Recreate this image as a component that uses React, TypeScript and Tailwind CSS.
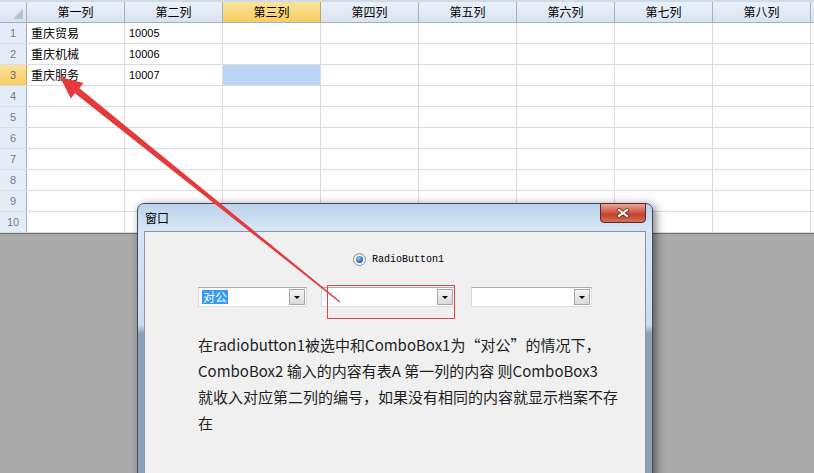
import React from "react";

const cols = ["第一列", "第二列", "第三列", "第四列", "第五列", "第六列", "第七列", "第八列"];
const data: string[][] = [
  ["重庆贸易", "10005"],
  ["重庆机械", "10006"],
  ["重庆服务", "10007"],
];

function Combo({ w, children }: { w: string; children?: React.ReactNode }) {
  return (
    <div
      className={`relative h-[20px] ${w} bg-white border border-[#dbdfe6] border-t-[#abadb3] border-l-[#d5d8de] flex items-center`}
    >
      {children}
      <div className="absolute right-[1px] top-[1px] bottom-[1px] w-[16px] border border-[#a7a7a7] bg-[linear-gradient(#f4f4f4,#d9d9d9)] flex items-center justify-center">
        <div className="w-0 h-0 border-l-[3px] border-r-[3px] border-t-[3px] border-l-transparent border-r-transparent border-t-black" />
      </div>
    </div>
  );
}

export default function App() {
  return (
    <div className="relative w-[814px] h-[473px] overflow-hidden bg-[#ababab] font-['Noto_Sans_CJK_SC',sans-serif]">
      {/* spreadsheet */}
      <div className="bg-white">
        <div className="h-[2px] bg-[#d0dbe8]" />
        <div className="flex h-[21px] bg-[linear-gradient(#eaf0f8,#d9e4f1)] border-b border-[#9db3cc]">
          <div className="relative w-[27px] border-r border-[#9db3cc]">
            <div className="absolute right-[3px] bottom-[3px] w-0 h-0 border-l-[10px] border-b-[10px] border-l-transparent border-b-[#b5c1ce]" />
          </div>
          {cols.map((c, i) => (
            <div
              key={c}
              className={
                i === 2
                  ? "w-[98px] border-r border-[#c9a64a] bg-[linear-gradient(#fbe39d,#f7cd62)] flex items-center justify-center text-[12px] text-black"
                  : "w-[98px] border-r border-[#9db3cc] flex items-center justify-center text-[12px] text-black"
              }
            >
              {c}
            </div>
          ))}
          <div className="flex-1" />
        </div>
        {Array.from({ length: 10 }).map((_, r) => (
          <div key={r} className="flex h-[21px] border-b border-[#dadcde]">
            <div
              className={
                r === 2
                  ? "w-[27px] border-r border-[#c9a64a] bg-[linear-gradient(#fbe39d,#f7cd62)] flex items-center justify-center text-[11px] text-[#6a6a6a] font-['Liberation_Sans',sans-serif]"
                  : "w-[27px] border-r border-[#9db3cc] bg-[#e4ecf7] flex items-center justify-center text-[11px] text-[#6b7d99] font-['Liberation_Sans',sans-serif]"
              }
            >
              {r + 1}
            </div>
            {cols.map((c, i) => (
              <div
                key={c}
                className={
                  r === 2 && i === 2
                    ? "w-[98px] border-r border-[#dadcde] bg-[#bcd5f4]"
                    : "w-[98px] border-r border-[#dadcde] flex items-center pl-[4px]"
                }
              >
                {data[r] && i === 0 && <span className="text-[12px] text-black">{data[r][0]}</span>}
                {data[r] && i === 1 && (
                  <span className="text-[11px] text-black font-['Liberation_Sans',sans-serif]">{data[r][1]}</span>
                )}
              </div>
            ))}
            <div className="flex-1" />
          </div>
        ))}
      </div>
      <div className="h-[1px] bg-[#6d6d6d]" />

      {/* dialog */}
      <div className="absolute left-[137px] top-[203px] w-[516px] h-[290px] rounded-t-[7px] border border-[#3f4d5e] bg-[linear-gradient(180deg,#bcd3ec_0%,#d6e6f6_9%,#cbdcee_42%,#8b9fb6_45%,#8b9fb6_100%)] shadow-[3px_2px_10px_rgba(0,0,0,0.5)]">
        <div className="h-[27px] flex items-center pl-[7px] text-[12px] text-black">窗口</div>
        <div className="absolute left-[462px] top-[-1px] w-[46px] h-[20px] rounded-b-[4px] border border-[#5a2a24] bg-[linear-gradient(#e8a898,#d05a44_45%,#c2412b_60%,#d8725c)] flex items-center justify-center">
          <svg width="14" height="10" viewBox="0 0 14 10">
            <path d="M3 2 L11 8 M11 2 L3 8" stroke="#6b2b22" strokeWidth="3.6" strokeLinecap="square" />
            <path d="M3 2 L11 8 M11 2 L3 8" stroke="#ffffff" strokeWidth="2" strokeLinecap="square" />
          </svg>
        </div>
        <div className="mx-[6px] h-[262px] bg-[#f0f0f0] border border-[#8596aa]">
          {/* radio */}
          <div className="mt-[20px] ml-[208px] h-[14px] flex items-center">
            <div className="w-[13px] h-[13px] rounded-full border border-[#8a8c8e] bg-[linear-gradient(#e6e6e6,#ffffff)] flex items-center justify-center">
              <div className="w-[7px] h-[7px] rounded-full bg-[radial-gradient(circle_at_40%_35%,#8fd2ff,#2b6fb3_60%,#1b4f86)]" />
            </div>
            <span className="ml-[6px] text-[10px] text-black font-['Liberation_Mono','Courier_New',monospace]">RadioButton1</span>
          </div>
          {/* combos */}
          <div className="mt-[21px] ml-[53px] flex">
            <Combo w="w-[109px]">
              <span className="ml-[3px] px-[1px] bg-[#3399ff] text-white text-[12px] leading-[14px]">对公</span>
            </Combo>
            <div className="ml-[14px]">
              <Combo w="w-[134px]" />
            </div>
            <div className="ml-[16px]">
              <Combo w="w-[121px]" />
            </div>
          </div>
          {/* text */}
          <div className="mt-[25px] ml-[53px] text-[15px] leading-[26px] text-[#1e1e1e] whitespace-nowrap">
            <div>在radiobutton1被选中和ComboBox1为“对公”的情况下，</div>
            <div>ComboBox2 输入的内容有表A 第一列的内容 则ComboBox3</div>
            <div>就收入对应第二列的编号，如果没有相同的内容就显示档案不存</div>
            <div>在</div>
          </div>
        </div>
      </div>

      {/* red highlight rect */}
      <div className="absolute left-[327px] top-[285px] w-[128px] h-[34px] border border-[#e04848]" />

      {/* arrow */}
      <svg className="absolute left-0 top-0 pointer-events-none" width="814" height="473" viewBox="0 0 814 473">
        <polygon
          points="60,77 83.5,83 79.4,88.3 340.4,301.5 339.6,302.5 75,93.3 70.8,98.5"
          fill="#e5393a"
        />
      </svg>
    </div>
  );
}
